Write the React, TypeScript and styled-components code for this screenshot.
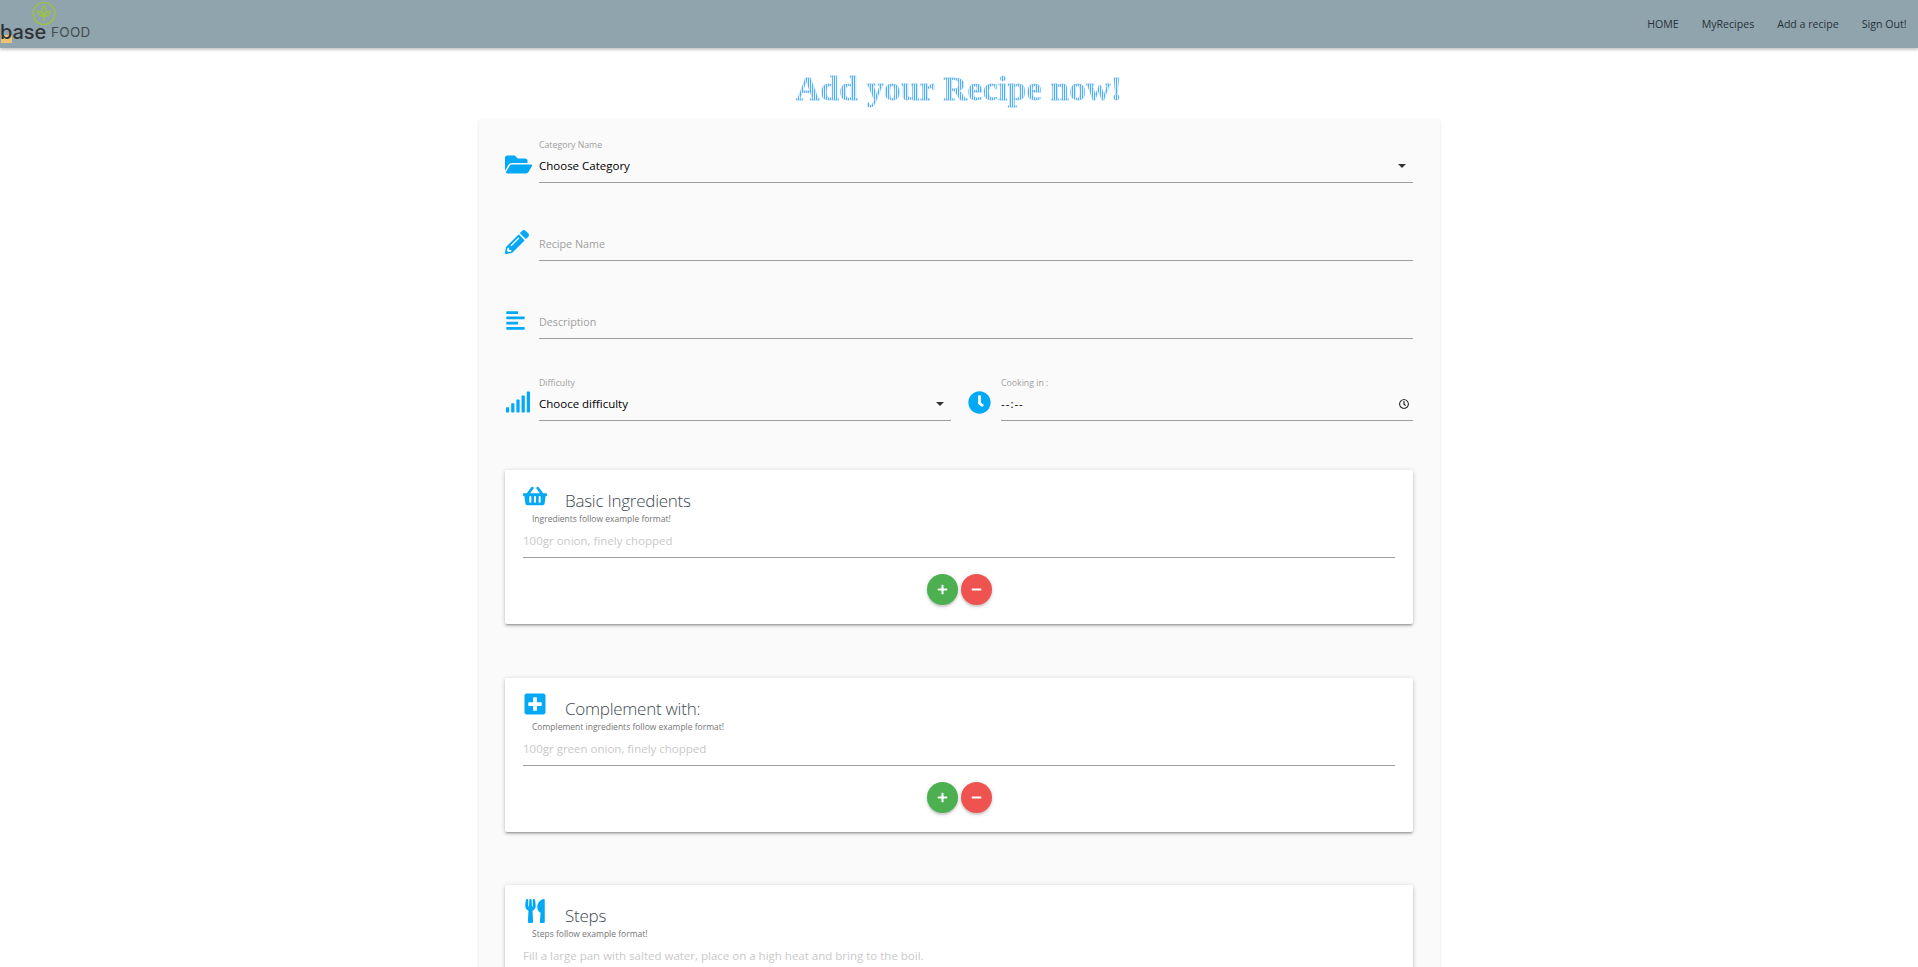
import React from 'react';
import styled, { createGlobalStyle } from 'styled-components';
import {
  FaAlignLeft,
  FaClock,
  FaFolderOpen,
  FaMinus,
  FaPencilAlt,
  FaPlus,
  FaPlusSquare,
  FaRegClock,
  FaShoppingBasket,
  FaSignal,
  FaUtensils,
} from 'react-icons/fa';

const GlobalStyle = createGlobalStyle`
  html, body {
    margin: 0;
    height: 967px;
    overflow: hidden;
    background: #fff;
    font-family: "Open Sans", "Noto Sans", sans-serif;
  }
  * { box-sizing: border-box; }
`;

const NavBar = styled.nav`
  height: 48px;
  background: #90a4ae;
  box-shadow: 0 2px 2px 0 rgba(0, 0, 0, 0.14), 0 1px 5px 0 rgba(0, 0, 0, 0.12);
  display: flex;
  justify-content: space-between;
  align-items: center;
`;

const Logo = styled.div`
  position: relative;
  width: 100px;
  height: 48px;
`;

const LogoMark = styled.svg`
  position: absolute;
  left: 32px;
  top: 1px;
  width: 24px;
  height: 25px;
`;

const LogoChip = styled.span`
  position: absolute;
  left: 1px;
  top: 35px;
  width: 11px;
  height: 8px;
  background: #eec270;
`;

const LogoWord = styled.span`
  position: absolute;
  left: 0;
  top: 19px;
  font-family: "Inter", sans-serif;
  font-size: 20px;
  line-height: 26px;
  font-weight: 500;
  letter-spacing: -0.1px;
  color: #2e3336;
`;

const LogoFood = styled.span`
  position: absolute;
  left: 51px;
  top: 23px;
  font-family: "Inter", sans-serif;
  font-size: 13.5px;
  line-height: 18px;
  letter-spacing: 0.3px;
  color: #454c50;
`;

const NavLinks = styled.ul`
  display: flex;
  list-style: none;
  margin: 0;
  padding: 0;
`;

const NavLink = styled.li`
  padding: 0 11.5px;
  font-size: 10.6px;
  line-height: 48px;
  color: #263238;
  white-space: nowrap;
`;

const Title = styled.h1`
  margin: 0;
  height: 71px;
  padding-top: 18px;
  text-align: center;
  font-family: "Liberation Serif", "DejaVu Serif", serif;
  font-size: 33.5px;
  line-height: 46px;
  font-weight: 700;
  letter-spacing: 0.3px;
  color: transparent;
  -webkit-text-stroke: 0.3px #6dbbfb;
  background: repeating-linear-gradient(90deg, #4faefa 0 1px, #e6f3fe 1px 2px);
  background-clip: text;
  -webkit-background-clip: text;
`;

const FormCard = styled.form`
  width: 961px;
  margin: 0 0 0 479px;
  padding: 20px 27px 0 26px;
  background: #fafafa;
  box-shadow: 0 1px 3px rgba(0, 0, 0, 0.12);
  border-radius: 2px;
`;

const Row = styled.div<{ $gap: number }>`
  display: flex;
  align-items: center;
  margin-bottom: ${(p) => p.$gap}px;
`;

const IconSlot = styled.div<{ $width: number; $inset?: number }>`
  width: ${(p) => p.$width}px;
  margin-left: ${(p) => p.$inset ?? 0}px;
  flex: none;
  padding-top: 6px;
  color: #03a9f4;
  display: flex;
`;

const Field = styled.div`
  flex: 1;
  height: 44px;
  display: flex;
  flex-direction: column;
  justify-content: flex-end;
  border-bottom: 1px solid #9e9e9e;
`;

const FieldLabel = styled.label`
  display: block;
  font-size: 8.75px;
  line-height: 13px;
  color: #9e9e9e;
`;

const ValueRow = styled.div`
  height: 30px;
  padding-bottom: 3px;
  display: flex;
  align-items: center;
  justify-content: space-between;
  font-size: 11.5px;
  color: #000;
`;

const TimeValue = styled.span`
  letter-spacing: 1px;
`;

const Caret = styled.span`
  width: 0;
  height: 0;
  margin-right: 7px;
  border-left: 4px solid transparent;
  border-right: 4px solid transparent;
  border-top: 4px solid #333;
`;

const PlainInput = styled.input`
  display: block;
  width: 100%;
  height: 30px;
  padding: 0 0 2px;
  border: 0;
  outline: 0;
  background: transparent;
  font: inherit;
  font-size: 10.75px;
  &::placeholder { color: #a0a0a0; opacity: 1; }
`;

const TimeIcon = styled(FaRegClock)`
  margin-right: 4px;
  color: #111;
`;

const Panel = styled.section<{ $gap: number }>`
  height: 154px;
  margin-bottom: ${(p) => p.$gap}px;
  padding: 14px 18px 0 18px;
  background: #fff;
  border-radius: 2px;
  box-shadow: 0 2px 2px 0 rgba(0, 0, 0, 0.14), 0 3px 1px -2px rgba(0, 0, 0, 0.12),
    0 1px 5px 0 rgba(0, 0, 0, 0.2);
`;

const PanelHead = styled.div`
  display: flex;
  align-items: flex-start;
  height: 26px;
  color: #03a9f4;
`;

const PanelTitle = styled.h2`
  margin: 0 0 0 8px;
  font-size: 17px;
  line-height: 28px;
  padding-top: 3px;
  font-weight: 300;
  letter-spacing: -0.25px;
  color: #3c4a52;
`;

const PanelIconBox = styled.span`
  width: 34px;
  height: 26px;
  flex: none;
  display: flex;
  svg { width: auto; }
`;

const Hint = styled.p`
  margin: 0 0 0 9px;
  padding-top: 2px;
  font-size: 8.5px;
  line-height: 13px;
  color: #757575;
`;

const ListInput = styled.input`
  display: block;
  width: 100%;
  height: 33px;
  padding: 0 0 2px;
  border: 0;
  border-bottom: 1px solid #9e9e9e;
  outline: 0;
  background: transparent;
  font: inherit;
  font-size: 11.5px;
  &::placeholder { color: #c9c9c9; opacity: 1; }
`;

const ActionRow = styled.div`
  display: flex;
  justify-content: center;
  gap: 3px;
  margin-top: 16px;
`;

const RoundButton = styled.button<{ $color: string }>`
  width: 31px;
  height: 31px;
  padding: 0;
  border: 0;
  border-radius: 50%;
  display: flex;
  align-items: center;
  justify-content: center;
  color: #fff;
  background: ${(p) => p.$color};
  box-shadow: 0 2px 2px 0 rgba(0, 0, 0, 0.14), 0 1px 5px 0 rgba(0, 0, 0, 0.12);
`;

type PanelProps = {
  icon: React.ReactNode;
  title: string;
  hint: string;
  example: string;
  gap: number;
};

const IngredientPanel = ({ icon, title, hint, example, gap }: PanelProps) => (
  <Panel $gap={gap}>
    <PanelHead>
      <PanelIconBox>{icon}</PanelIconBox>
      <PanelTitle>{title}</PanelTitle>
    </PanelHead>
    <Hint>{hint}</Hint>
    <ListInput placeholder={example} />
    <ActionRow>
      <RoundButton type="button" $color="#4caf50"><FaPlus size={11} /></RoundButton>
      <RoundButton type="button" $color="#ef5350"><FaMinus size={11} /></RoundButton>
    </ActionRow>
  </Panel>
);

export default function App() {
  return (
    <>
      <GlobalStyle />
      <NavBar>
        <Logo>
          <LogoMark viewBox="0 0 24 25" fill="none" stroke="#9fc43a" strokeWidth="1.2">
            <circle cx="12" cy="12.5" r="11" />
            <path d="M12 5c2.4 2.4 2.4 6 0 9-2.4-3-2.4-6.600 0-9Z" />
            <path d="M5.500 10c3 .3 5.300 2 6.500 5-3 .4-5.600-1.600-6.500-5Z" />
            <path d="M18.500 10c-3 .3-5.300 2-6.500 5 3 .4 5.600-1.600 6.500-5Z" />
            <path d="M12 15v5" />
          </LogoMark>
          <LogoChip />
          <LogoWord>base</LogoWord>
          <LogoFood>FOOD</LogoFood>
        </Logo>
        <NavLinks>
          <NavLink>HOME</NavLink>
          <NavLink>MyRecipes</NavLink>
          <NavLink>Add a recipe</NavLink>
          <NavLink>Sign Out!</NavLink>
        </NavLinks>
      </NavBar>

      <Title>Add your Recipe now!</Title>

      <FormCard>
        <Row $gap={34}>
          <IconSlot $width={34}><FaFolderOpen size={27} /></IconSlot>
          <Field>
            <FieldLabel>Category Name</FieldLabel>
            <ValueRow>Choose Category<Caret /></ValueRow>
          </Field>
        </Row>
        <Row $gap={34}>
          <IconSlot $width={34}><FaPencilAlt size={24} /></IconSlot>
          <Field><PlainInput placeholder="Recipe Name" /></Field>
        </Row>
        <Row $gap={38}>
          <IconSlot $width={34}><FaAlignLeft size={21} /></IconSlot>
          <Field><PlainInput placeholder="Description" /></Field>
        </Row>
        <Row $gap={49}>
          <IconSlot $width={34}><FaSignal size={26} /></IconSlot>
          <Field>
            <FieldLabel>Difficulty</FieldLabel>
            <ValueRow>Chooce difficulty<Caret /></ValueRow>
          </Field>
          <IconSlot $width={33} $inset={17}><FaClock size={23} /></IconSlot>
          <Field>
            <FieldLabel>Cooking in :</FieldLabel>
            <ValueRow><TimeValue>--:--</TimeValue><TimeIcon size={10} /></ValueRow>
          </Field>
        </Row>

        <IngredientPanel
          icon={<FaShoppingBasket size={24} />}
          title="Basic Ingredients"
          hint="Ingredients follow example format!"
          example="100gr onion, finely chopped"
          gap={54}
        />
        <IngredientPanel
          icon={<FaPlusSquare size={24} />}
          title="Complement with:"
          hint="Complement ingredients follow example format!"
          example="100gr green onion, finely chopped"
          gap={53}
        />
        <IngredientPanel
          icon={<FaUtensils size={24} />}
          title="Steps"
          hint="Steps follow example format!"
          example="Fill a large pan with salted water, place on a high heat and bring to the boil."
          gap={0}
        />
      </FormCard>
    </>
  );
}
